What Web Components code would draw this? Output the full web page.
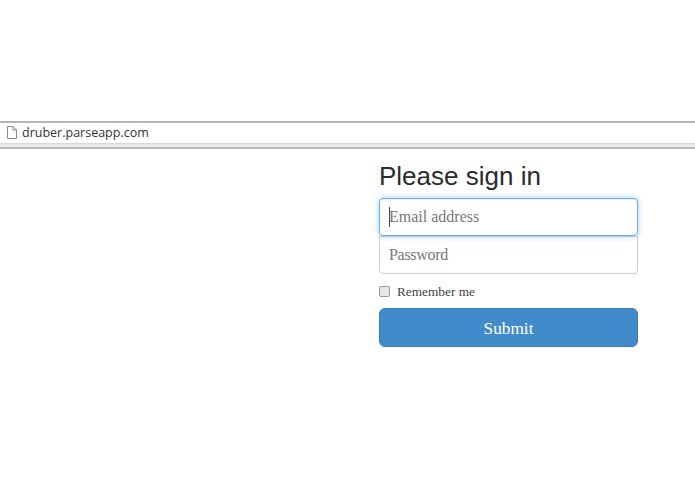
<!DOCTYPE html>
<html lang="en"><head><meta charset="utf-8"><title>Please sign in</title>
<style>html,body{margin:0;padding:0;background:#fff}body{width:695px;height:494px;overflow:hidden}</style>
</head><body>
<browser-bar>druber.parseapp.com</browser-bar>
<sign-form>
  <form-heading>Please sign in</form-heading>
  <form-field focused>Email address</form-field>
  <form-field last>Password</form-field>
  <remember-check>Remember me</remember-check>
  <submit-button>Submit</submit-button>
</sign-form>
<script>
function def(name, html){
  customElements.define(name, class extends HTMLElement{
    constructor(){super();this.attachShadow({mode:'open'}).innerHTML=html;}
  });
}
def('browser-bar',`<style>
:host{display:block;margin-top:121px;height:28px;box-sizing:border-box;border-top:2px solid #b4b4b4;background:#fff;position:relative;
 font:12.500px "Open Sans","Noto Sans",sans-serif;color:#333}
.row{display:flex;align-items:center;height:20px;padding:0 0 2px 7px;box-sizing:border-box;gap:5px}
.foot{height:6px;box-sizing:border-box;border-top:1px solid #d8d8d8;border-bottom:2px solid #b8b8b8;background:#ececec}
svg{flex:none}
</style>
<div class="row"><svg width="10" height="13" viewBox="0 0 10 13"><path d="M.5.5h5.500l3.500 3.500v8.500h-9z M6 .5v3.500h3.500" fill="#fff" stroke="#8a8a8a"/></svg><slot></slot></div>
<div class="foot"></div>`);
def('sign-form',`<style>:host{display:block;width:259px;margin:11px 0 0 379px}</style><slot></slot>`);
def('form-heading',`<style>:host{display:block;font:26px/33px "Liberation Sans",Arial,sans-serif;color:#2b2b2b;height:38px}</style><slot></slot>`);
def('form-field',`<style>
:host{display:block;box-sizing:border-box;height:38px;border:1px solid #ccc;border-radius:0 0 4px 4px;padding:0 9px;background:#fff;
 font:16px/36px "Liberation Serif","Times New Roman",serif;color:#777;position:relative}
:host([last]){letter-spacing:-.3px}
:host([focused]){border-color:#66afe9;border-radius:4px;box-shadow:inset 0 1px 1px rgba(0,0,0,.08),0 0 6px rgba(102,175,233,.6);z-index:1}
:host([focused]) .c{position:absolute;left:9px;top:8px;width:1px;height:20px;background:#444}
</style><span class="c"></span><slot></slot>`);
def('remember-check',`<style>
:host{display:flex;align-items:center;gap:7px;margin-top:9px;height:17px;font:13.300px/17px "Liberation Serif","Times New Roman",serif;color:#444}
input{appearance:none;margin:0;width:11px;height:11px;box-sizing:border-box;border:1px solid #999;border-radius:2px;background:#e6e6e6}
</style><input type="checkbox" aria-label="Remember me"><slot></slot>`);
def('submit-button',`<style>
:host{display:block;box-sizing:border-box;height:39px;margin-top:8px;background:#428bca;border:1px solid #357ebd;border-radius:6px;color:#fff;text-align:center;
 font:17.300px/39px "Liberation Serif","Times New Roman",serif}
</style><slot></slot>`);
</script>
</body></html>
